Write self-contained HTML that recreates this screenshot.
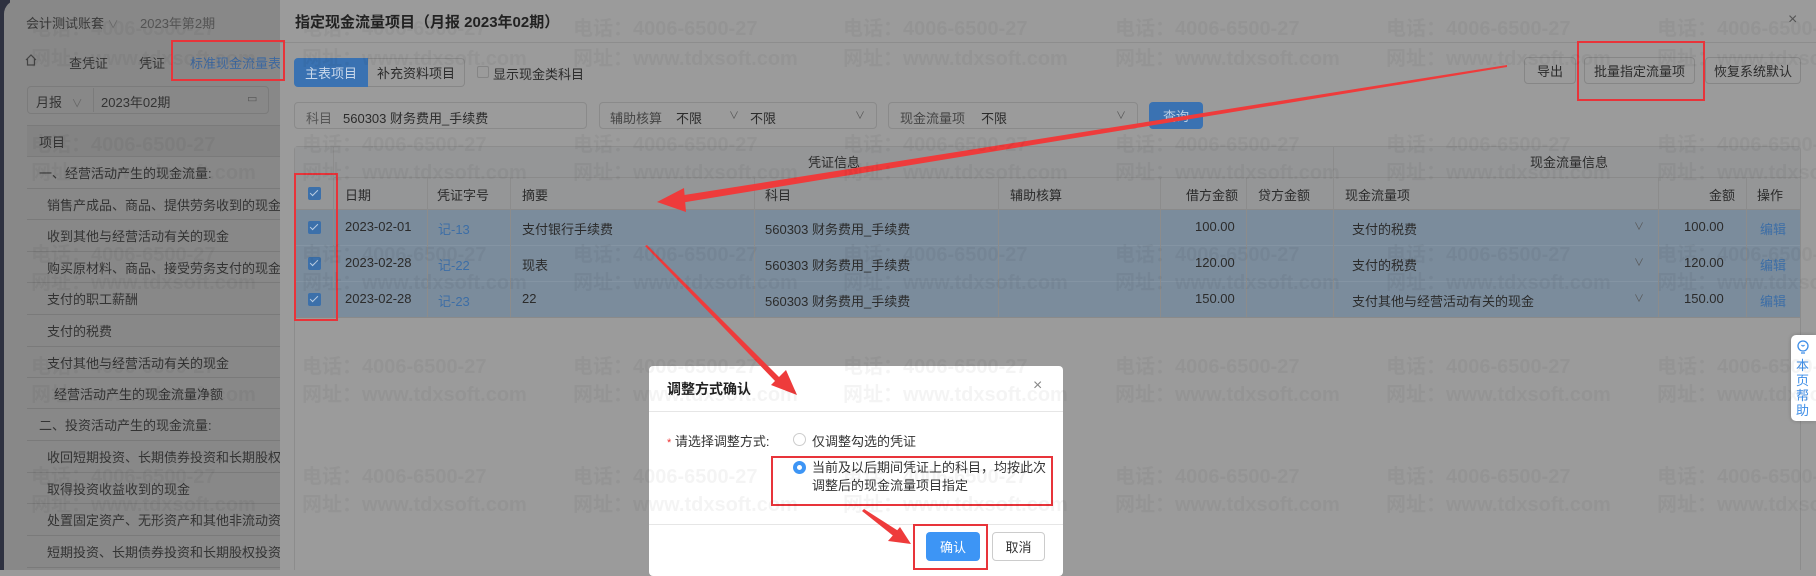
<!DOCTYPE html>
<html><head><meta charset="utf-8">
<style>
*{box-sizing:border-box;margin:0;padding:0}
body{width:1816px;height:570px;overflow:hidden;position:relative;background:#9a9a9a;font-family:"Liberation Sans","Noto Sans CJK SC",sans-serif;font-size:13px;color:#2b2b2b}
.a{position:absolute;white-space:nowrap}
.left{position:absolute;left:0;top:0;width:280px;height:570px;background:#888;}
.edge{position:absolute;left:0;top:0;width:10px;height:570px;background:#2e3140}
.lp{position:absolute;left:4px;top:0;width:276px;height:570px;background:#888;border-top-left-radius:14px}
.lrow{position:absolute;left:27px;width:253px;border-bottom:1px solid #7a7a7a;font-size:13px;color:#333;padding-left:12px;display:flex;align-items:center;white-space:nowrap;overflow:hidden}
.drawer{position:absolute;left:280px;top:0;width:1536px;height:570px;background:#9b9b9b}
.box{position:absolute;border:1px solid #8a8a8a;border-radius:4px}
.red{position:absolute;border:2px solid #e8343a}
.vl{position:absolute;width:1px;background:#8c8c8c}
.cb{position:absolute;width:13px;height:13px;background:#3c70aa;border-radius:2px}
.cb:after{content:"";position:absolute;left:4px;top:1px;width:3px;height:7px;border:solid #b9cde2;border-width:0 1.5px 1.5px 0;transform:rotate(45deg)}
.lnk{color:#3d6ea6}
.wm{position:absolute;font-size:20px;font-weight:bold;color:rgba(0,0,0,0.045);white-space:nowrap}
.btn{position:absolute;border:1px solid #868686;border-radius:4px;display:flex;align-items:center;justify-content:center;color:#2b2b2b;background:#9b9b9b}
</style></head><body>

<div class="left">
 <div class="edge"></div>
 <div class="lp"></div>
 <div class="a" style="left:26px;top:13px;color:#3a3a3a">会计测试账套 <span style="color:#6a6a6a;font-size:11px">∨</span></div>
 <div class="a" style="left:140px;top:13px;color:#555">2023年第2期</div>
 <svg class="a" style="left:24px;top:53px" width="14" height="14" viewBox="0 0 14 14"><path d="M2 7 L7 2 L12 7 M3.5 6 V12 H10.5 V6" fill="none" stroke="#444" stroke-width="1.2"/></svg>
 <div class="a" style="left:69px;top:53px;color:#333">查凭证</div>
 <div class="a" style="left:139px;top:53px;color:#333">凭证</div>
 <div class="a" style="left:190px;top:53px;color:#3d68a0">标准现金流量表</div>
 <div class="box" style="left:27px;top:86px;width:242px;height:28px;border-color:#7b7b7b"></div>
 <div class="a" style="left:36px;top:92px;color:#333">月报 <span style="color:#666;font-size:11px;margin-left:6px">∨</span></div>
 <div class="a" style="left:93px;top:88px;width:1px;height:24px;background:#7b7b7b"></div>
 <div class="a" style="left:101px;top:92px;color:#333">2023年02期</div>
 <div class="a" style="left:247px;top:92px;color:#555;font-size:11px">▭</div>
 <div class="lrow" style="top:125px;height:32px;border-top:1px solid #7a7a7a;background:#838383">项目</div>
 <div class="lrow" style="top:157px;height:32px">一、经营活动产生的现金流量:</div>
 <div class="lrow" style="top:189px;height:31px;padding-left:20px">销售产成品、商品、提供劳务收到的现金</div>
 <div class="lrow" style="top:220px;height:32px;padding-left:20px">收到其他与经营活动有关的现金</div>
 <div class="lrow" style="top:252px;height:31px;padding-left:20px">购买原材料、商品、接受劳务支付的现金</div>
 <div class="lrow" style="top:283px;height:32px;padding-left:20px">支付的职工薪酬</div>
 <div class="lrow" style="top:315px;height:32px;padding-left:20px">支付的税费</div>
 <div class="lrow" style="top:347px;height:31px;padding-left:20px">支付其他与经营活动有关的现金</div>
 <div class="lrow" style="top:378px;height:31px;padding-left:27px">经营活动产生的现金流量净额</div>
 <div class="lrow" style="top:409px;height:32px">二、投资活动产生的现金流量:</div>
 <div class="lrow" style="top:441px;height:32px;padding-left:20px">收回短期投资、长期债券投资和长期股权投资</div>
 <div class="lrow" style="top:473px;height:31px;padding-left:20px">取得投资收益收到的现金</div>
 <div class="lrow" style="top:504px;height:32px;padding-left:20px">处置固定资产、无形资产和其他非流动资产</div>
 <div class="lrow" style="top:536px;height:32px;padding-left:20px">短期投资、长期债券投资和长期股权投资支</div>
</div>

<div class="drawer"></div>
<div class="a" style="left:295px;top:11px;font-size:15px;font-weight:bold;color:#222">指定现金流量项目（月报 2023年02期）</div>
<div class="a" style="left:280px;top:42px;width:1536px;height:1px;background:#8d8d8d"></div>
<div class="a" style="left:1788px;top:11px;font-size:16px;color:#555">×</div>

<div class="a" style="left:294px;top:58px;width:74px;height:29px;background:#3a72b2;border-radius:4px 0 0 4px;color:#c9d8ea;display:flex;align-items:center;justify-content:center">主表项目</div>
<div class="a" style="left:368px;top:58px;width:97px;height:29px;border:1px solid #878787;border-left:none;border-radius:0 4px 4px 0;display:flex;align-items:center;justify-content:center">补充资料项目</div>
<div class="a" style="left:477px;top:66px;width:12px;height:12px;border:1px solid #858585;border-radius:2px"></div>
<div class="a" style="left:493px;top:64px">显示现金类科目</div>

<div class="btn" style="left:1524px;top:57px;width:52px;height:27px">导出</div>
<div class="btn" style="left:1584px;top:57px;width:111px;height:27px">批量指定流量项</div>
<div class="btn" style="left:1705px;top:57px;width:96px;height:27px">恢复系统默认</div>

<div class="box" style="left:294px;top:102px;width:293px;height:27px"></div>
<div class="a" style="left:306px;top:108px;color:#555">科目</div>
<div class="a" style="left:343px;top:108px">560303 财务费用_手续费</div>
<div class="box" style="left:599px;top:102px;width:278px;height:27px"></div>
<div class="a" style="left:610px;top:108px;color:#444">辅助核算</div>
<div class="a" style="left:676px;top:108px">不限</div>
<div class="a" style="left:729px;top:107px;color:#555;font-size:10px">∨</div>
<div class="a" style="left:750px;top:108px">不限</div>
<div class="a" style="left:855px;top:107px;color:#555;font-size:10px">∨</div>
<div class="box" style="left:888px;top:102px;width:250px;height:27px"></div>
<div class="a" style="left:900px;top:108px;color:#444">现金流量项</div>
<div class="a" style="left:981px;top:108px">不限</div>
<div class="a" style="left:1116px;top:107px;color:#555;font-size:10px">∨</div>
<div class="a" style="left:1149px;top:102px;width:54px;height:27px;background:#3a72b2;border-radius:4px;color:#b9cde2;display:flex;align-items:center;justify-content:center">查询</div>

<div class="a" style="left:294px;top:146px;width:1507px;height:424px;border:1px solid #8c8c8c;border-bottom:none;border-radius:4px 4px 0 0"></div>
<div class="a" style="left:295px;top:147px;width:1505px;height:62px;background:#959697"></div>
<div class="a" style="left:295px;top:209px;width:1505px;height:108px;background:#7b8c9c"></div>
<div class="a" style="left:333px;top:177px;width:1467px;height:1px;background:#8a8a8a"></div>
<div class="a" style="left:295px;top:209px;width:1505px;height:1px;background:#8a8a8a"></div>
<div class="a" style="left:295px;top:245px;width:1505px;height:1px;background:#8494a3"></div>
<div class="a" style="left:295px;top:281px;width:1505px;height:1px;background:#8494a3"></div>
<div class="a" style="left:295px;top:317px;width:1505px;height:1px;background:#8a8a8a"></div>
<div class="vl" style="left:333px;top:147px;height:170px"></div>
<div class="vl" style="left:1333px;top:147px;height:170px"></div>
<div class="vl" style="left:427px;top:178px;height:139px"></div>
<div class="vl" style="left:510px;top:178px;height:139px"></div>
<div class="vl" style="left:754px;top:178px;height:139px"></div>
<div class="vl" style="left:998px;top:178px;height:139px"></div>
<div class="vl" style="left:1160px;top:178px;height:139px"></div>
<div class="vl" style="left:1246px;top:178px;height:139px"></div>
<div class="vl" style="left:1658px;top:178px;height:139px"></div>
<div class="vl" style="left:1746px;top:178px;height:139px"></div>

<div class="a" style="left:808px;top:152px">凭证信息</div>
<div class="a" style="left:1530px;top:152px">现金流量信息</div>
<div class="cb" style="left:308px;top:187px"></div>
<div class="a" style="left:345px;top:185px">日期</div>
<div class="a" style="left:437px;top:185px">凭证字号</div>
<div class="a" style="left:522px;top:185px">摘要</div>
<div class="a" style="left:765px;top:185px">科目</div>
<div class="a" style="left:1010px;top:185px">辅助核算</div>
<div class="a" style="left:1186px;top:185px">借方金额</div>
<div class="a" style="left:1258px;top:185px">贷方金额</div>
<div class="a" style="left:1345px;top:185px">现金流量项</div>
<div class="a" style="left:1709px;top:185px">金额</div>
<div class="a" style="left:1757px;top:185px">操作</div>

<div class="cb" style="left:308px;top:221px"></div>
<div class="a" style="left:345px;top:219px">2023-02-01</div>
<div class="a lnk" style="left:438px;top:219px">记-13</div>
<div class="a" style="left:522px;top:219px">支付银行手续费</div>
<div class="a" style="left:765px;top:219px">560303 财务费用_手续费</div>
<div class="a" style="left:1195px;top:219px">100.00</div>
<div class="a" style="left:1352px;top:219px">支付的税费</div>
<div class="a" style="left:1634px;top:218px;color:#555;font-size:10px">∨</div>
<div class="a" style="left:1684px;top:219px">100.00</div>
<div class="a lnk" style="left:1760px;top:219px">编辑</div>

<div class="cb" style="left:308px;top:257px"></div>
<div class="a" style="left:345px;top:255px">2023-02-28</div>
<div class="a lnk" style="left:438px;top:255px">记-22</div>
<div class="a" style="left:522px;top:255px">现表</div>
<div class="a" style="left:765px;top:255px">560303 财务费用_手续费</div>
<div class="a" style="left:1195px;top:255px">120.00</div>
<div class="a" style="left:1352px;top:255px">支付的税费</div>
<div class="a" style="left:1634px;top:254px;color:#555;font-size:10px">∨</div>
<div class="a" style="left:1684px;top:255px">120.00</div>
<div class="a lnk" style="left:1760px;top:255px">编辑</div>

<div class="cb" style="left:308px;top:293px"></div>
<div class="a" style="left:345px;top:291px">2023-02-28</div>
<div class="a lnk" style="left:438px;top:291px">记-23</div>
<div class="a" style="left:522px;top:291px">22</div>
<div class="a" style="left:765px;top:291px">560303 财务费用_手续费</div>
<div class="a" style="left:1195px;top:291px">150.00</div>
<div class="a" style="left:1352px;top:291px">支付其他与经营活动有关的现金</div>
<div class="a" style="left:1634px;top:290px;color:#555;font-size:10px">∨</div>
<div class="a" style="left:1684px;top:291px">150.00</div>
<div class="a lnk" style="left:1760px;top:291px">编辑</div>

<div class="a" style="left:1791px;top:335px;width:25px;height:86px;background:#fff;border-radius:5px 0 0 5px;box-shadow:0 0 4px rgba(0,0,0,.2)"></div>
<svg class="a" style="left:1796px;top:340px" width="14" height="16" viewBox="0 0 14 16"><circle cx="7" cy="6" r="5" fill="none" stroke="#3d8ee8" stroke-width="1.3"/><path d="M5 13 H9 M5.5 5 Q7 7 8.5 5" fill="none" stroke="#3d8ee8" stroke-width="1.2"/></svg>
<div class="a" style="left:1796px;top:358px;width:14px;font-size:13px;line-height:15px;color:#3d8ee8;white-space:normal">本页帮助</div>

<div class="a" style="left:649px;top:366px;width:414px;height:210px;background:#fff;border-radius:4px"></div>
<div class="a" style="left:667px;top:379px;font-size:14px;font-weight:bold;color:#222">调整方式确认</div>
<div class="a" style="left:1033px;top:377px;font-size:16px;color:#888">×</div>
<div class="a" style="left:649px;top:411px;width:414px;height:1px;background:#e6e6e6"></div>
<div class="a" style="left:667px;top:431px;color:#333"><span style="color:#e33;font-size:11px">*</span> 请选择调整方式:</div>
<div class="a" style="left:793px;top:433px;width:13px;height:13px;border:1px solid #ccc;border-radius:50%"></div>
<div class="a" style="left:812px;top:431px;color:#333">仅调整勾选的凭证</div>
<div class="a" style="left:793px;top:461px;width:13px;height:13px;border:4px solid #3d95f5;border-radius:50%;background:#fff"></div>
<div class="a" style="left:812px;top:459px;color:#333;line-height:18px">当前及以后期间凭证上的科目，均按此次<br>调整后的现金流量项目指定</div>
<div class="a" style="left:649px;top:524px;width:414px;height:1px;background:#e6e6e6"></div>
<div class="a" style="left:926px;top:532px;width:54px;height:29px;background:#3d95f5;border-radius:4px;color:#fff;display:flex;align-items:center;justify-content:center">确认</div>
<div class="a" style="left:992px;top:532px;width:53px;height:29px;border:1px solid #ccc;border-radius:4px;color:#333;display:flex;align-items:center;justify-content:center">取消</div>

<div class="red" style="left:171px;top:40px;width:114px;height:41px"></div>
<div class="red" style="left:294px;top:173px;width:44px;height:148px"></div>
<div class="red" style="left:1577px;top:41px;width:128px;height:60px"></div>
<div class="red" style="left:771px;top:456px;width:282px;height:50px"></div>
<div class="red" style="left:913px;top:524px;width:75px;height:46px"></div>

<svg class="a" style="left:0;top:0" width="1816" height="570">
 <polygon points="1507,65 1507,67 680,203 678,196" fill="#ee3b3b"/>
 <polygon points="657,202 684,188 686,212" fill="#ee3b3b"/>
 <polygon points="645,246 647,245 780,378 776,382" fill="#ee3b3b"/>
 <polygon points="797,395 771,385 786,370" fill="#ee3b3b"/>
 <polygon points="862,511 864,509 900,532 896,538" fill="#ee3b3b"/>
 <polygon points="911,544 888,541 900,527" fill="#ee3b3b"/>
</svg>

<div class="wm" style="left:31px;top:12px">电话：4006-6500-27</div>
<div class="wm" style="left:302px;top:12px">电话：4006-6500-27</div>
<div class="wm" style="left:573px;top:12px">电话：4006-6500-27</div>
<div class="wm" style="left:843px;top:12px">电话：4006-6500-27</div>
<div class="wm" style="left:1115px;top:12px">电话：4006-6500-27</div>
<div class="wm" style="left:1386px;top:12px">电话：4006-6500-27</div>
<div class="wm" style="left:1657px;top:12px">电话：4006-6500-27</div>
<div class="wm" style="left:31px;top:42px">网址：www.tdxsoft.com</div>
<div class="wm" style="left:302px;top:42px">网址：www.tdxsoft.com</div>
<div class="wm" style="left:573px;top:42px">网址：www.tdxsoft.com</div>
<div class="wm" style="left:843px;top:42px">网址：www.tdxsoft.com</div>
<div class="wm" style="left:1115px;top:42px">网址：www.tdxsoft.com</div>
<div class="wm" style="left:1386px;top:42px">网址：www.tdxsoft.com</div>
<div class="wm" style="left:1657px;top:42px">网址：www.tdxsoft.com</div>
<div class="wm" style="left:31px;top:128px">电话：4006-6500-27</div>
<div class="wm" style="left:302px;top:128px">电话：4006-6500-27</div>
<div class="wm" style="left:573px;top:128px">电话：4006-6500-27</div>
<div class="wm" style="left:843px;top:128px">电话：4006-6500-27</div>
<div class="wm" style="left:1115px;top:128px">电话：4006-6500-27</div>
<div class="wm" style="left:1386px;top:128px">电话：4006-6500-27</div>
<div class="wm" style="left:1657px;top:128px">电话：4006-6500-27</div>
<div class="wm" style="left:31px;top:156px">网址：www.tdxsoft.com</div>
<div class="wm" style="left:302px;top:156px">网址：www.tdxsoft.com</div>
<div class="wm" style="left:573px;top:156px">网址：www.tdxsoft.com</div>
<div class="wm" style="left:843px;top:156px">网址：www.tdxsoft.com</div>
<div class="wm" style="left:1115px;top:156px">网址：www.tdxsoft.com</div>
<div class="wm" style="left:1386px;top:156px">网址：www.tdxsoft.com</div>
<div class="wm" style="left:1657px;top:156px">网址：www.tdxsoft.com</div>
<div class="wm" style="left:31px;top:238px">电话：4006-6500-27</div>
<div class="wm" style="left:302px;top:238px">电话：4006-6500-27</div>
<div class="wm" style="left:573px;top:238px">电话：4006-6500-27</div>
<div class="wm" style="left:843px;top:238px">电话：4006-6500-27</div>
<div class="wm" style="left:1115px;top:238px">电话：4006-6500-27</div>
<div class="wm" style="left:1386px;top:238px">电话：4006-6500-27</div>
<div class="wm" style="left:1657px;top:238px">电话：4006-6500-27</div>
<div class="wm" style="left:31px;top:266px">网址：www.tdxsoft.com</div>
<div class="wm" style="left:302px;top:266px">网址：www.tdxsoft.com</div>
<div class="wm" style="left:573px;top:266px">网址：www.tdxsoft.com</div>
<div class="wm" style="left:843px;top:266px">网址：www.tdxsoft.com</div>
<div class="wm" style="left:1115px;top:266px">网址：www.tdxsoft.com</div>
<div class="wm" style="left:1386px;top:266px">网址：www.tdxsoft.com</div>
<div class="wm" style="left:1657px;top:266px">网址：www.tdxsoft.com</div>
<div class="wm" style="left:31px;top:350px">电话：4006-6500-27</div>
<div class="wm" style="left:302px;top:350px">电话：4006-6500-27</div>
<div class="wm" style="left:573px;top:350px">电话：4006-6500-27</div>
<div class="wm" style="left:843px;top:350px">电话：4006-6500-27</div>
<div class="wm" style="left:1115px;top:350px">电话：4006-6500-27</div>
<div class="wm" style="left:1386px;top:350px">电话：4006-6500-27</div>
<div class="wm" style="left:1657px;top:350px">电话：4006-6500-27</div>
<div class="wm" style="left:31px;top:378px">网址：www.tdxsoft.com</div>
<div class="wm" style="left:302px;top:378px">网址：www.tdxsoft.com</div>
<div class="wm" style="left:573px;top:378px">网址：www.tdxsoft.com</div>
<div class="wm" style="left:843px;top:378px">网址：www.tdxsoft.com</div>
<div class="wm" style="left:1115px;top:378px">网址：www.tdxsoft.com</div>
<div class="wm" style="left:1386px;top:378px">网址：www.tdxsoft.com</div>
<div class="wm" style="left:1657px;top:378px">网址：www.tdxsoft.com</div>
<div class="wm" style="left:31px;top:460px">电话：4006-6500-27</div>
<div class="wm" style="left:302px;top:460px">电话：4006-6500-27</div>
<div class="wm" style="left:573px;top:460px">电话：4006-6500-27</div>
<div class="wm" style="left:843px;top:460px">电话：4006-6500-27</div>
<div class="wm" style="left:1115px;top:460px">电话：4006-6500-27</div>
<div class="wm" style="left:1386px;top:460px">电话：4006-6500-27</div>
<div class="wm" style="left:1657px;top:460px">电话：4006-6500-27</div>
<div class="wm" style="left:31px;top:488px">网址：www.tdxsoft.com</div>
<div class="wm" style="left:302px;top:488px">网址：www.tdxsoft.com</div>
<div class="wm" style="left:573px;top:488px">网址：www.tdxsoft.com</div>
<div class="wm" style="left:843px;top:488px">网址：www.tdxsoft.com</div>
<div class="wm" style="left:1115px;top:488px">网址：www.tdxsoft.com</div>
<div class="wm" style="left:1386px;top:488px">网址：www.tdxsoft.com</div>
<div class="wm" style="left:1657px;top:488px">网址：www.tdxsoft.com</div>
</body></html>
